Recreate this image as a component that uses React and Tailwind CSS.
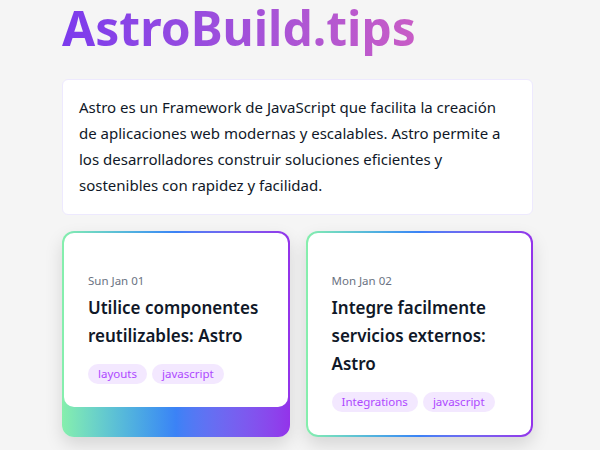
const posts = [
  { date: "Sun Jan 01", title: "Utilice componentes reutilizables: Astro", tags: ["layouts", "javascript"] },
  { date: "Mon Jan 02", title: "Integre facilmente servicios externos: Astro", tags: ["Integrations", "javascript"] },
];

const Card = ({ post }) => {
  return (
    <div className="rounded-xl bg-gradient-to-r from-[#86efac] via-[#3b82f6] to-[#9333ea] p-[2px] shadow-[0_8px_18px_rgba(0,0,0,0.13)]">
      <div className="rounded-[10px] bg-white px-6 pt-[38px] pb-[23px]">
        <p className="text-[11.5px] leading-5 text-gray-500">{post.date}</p>
        <h2 className="mt-[3px] text-[17px] leading-7 font-semibold text-gray-900">{post.title}</h2>
        <div className="mt-[14px] flex gap-[5px]">
          {post.tags.map((tag) => (
            <span key={tag} className="rounded-full bg-purple-100 px-2.5 text-[11.5px] leading-5 text-purple-500">
              {tag}
            </span>
          ))}
        </div>
      </div>
    </div>
  );
};

export default function App() {
  return (
    <div className="min-h-[450px] bg-[#f5f5f5] pl-[62px] font-['Noto_Sans',sans-serif]">
      <div className="w-[471px]">
        <h1 className="mb-[23px] text-5xl leading-[56px] font-bold">
          <span className="inline-block bg-gradient-to-r from-[#7c3aed] to-[#c85cc6] bg-clip-text text-transparent">AstroBuild.tips</span>
        </h1>
        <div className="rounded-md border border-[#ede9fe] bg-white p-4 pt-[14px] text-[15px] leading-[26px] text-gray-900">
          Astro es un Framework de JavaScript que facilita la creación de aplicaciones web modernas y escalables. Astro permite a los desarrolladores construir soluciones eficientes y sostenibles con rapidez y facilidad.
        </div>
        <div className="mt-4 grid grid-cols-2 gap-4">
          {posts.map((post) => (
            <Card key={post.date} post={post} />
          ))}
        </div>
      </div>
    </div>
  );
}
